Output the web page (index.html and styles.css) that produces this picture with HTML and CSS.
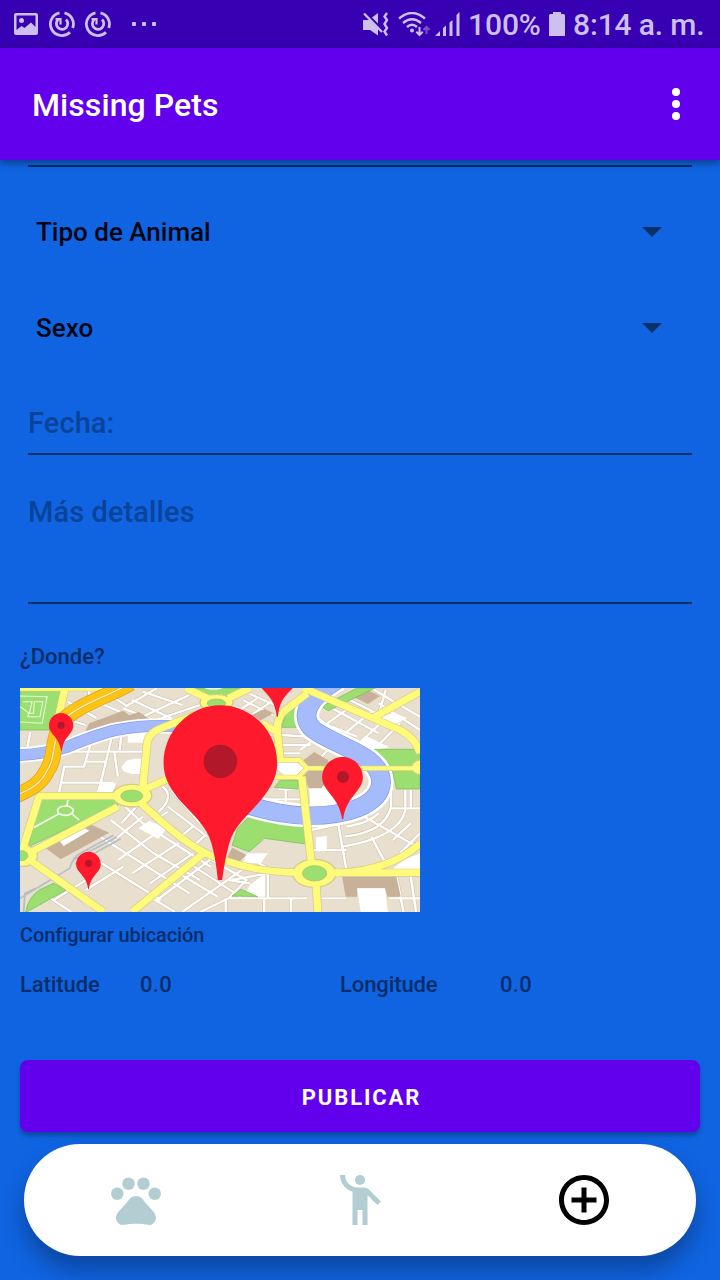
FILE: index.html
```html
<!DOCTYPE html>
<html lang="es">
<head>
<meta charset="utf-8">
<title>Missing Pets</title>
<link rel="stylesheet" href="styles.css">
</head>
<body>
<div class="screen">
  <header class="status">
    <div class="status-left">
      <svg class="ic-photo" width="24" height="22" viewBox="0 0 24 22"><path fill="currentColor" fill-rule="evenodd" d="M2 0h20a2 2 0 0 1 2 2v18a2 2 0 0 1-2 2H2a2 2 0 0 1-2-2V2a2 2 0 0 1 2-2zm.5 2.500V17l5-4 3 2 6.500-5.500 4.500 4.500V2.500zM7.500 5a2.500 2.500 0 1 1 0 5 2.500 2.500 0 0 1 0-5z"/></svg>
      <svg class="ic-sync" width="28" height="28" viewBox="0 0 28 28"><g fill="none" stroke="currentColor" stroke-width="2.800"><path d="M11.500 2.800A11.500 11.500 0 1 0 22 22.200M16.500 2.800A11.500 11.500 0 0 1 24.700 18"/><path d="M18 9.500a5.700 5.700 0 1 1-7.500-.3"/><path d="M7.500 9h5v5.500" stroke-width="2.200"/></g></svg>
      <svg class="ic-sync" width="28" height="28" viewBox="0 0 28 28"><g fill="none" stroke="currentColor" stroke-width="2.800"><path d="M11.500 2.800A11.500 11.500 0 1 0 22 22.200M16.500 2.800A11.500 11.500 0 0 1 24.700 18"/><path d="M18 9.500a5.700 5.700 0 1 1-7.500-.3"/><path d="M7.500 9h5v5.500" stroke-width="2.200"/></g></svg>
      <svg class="ic-more" width="25" height="4" viewBox="0 0 25 4" fill="currentColor"><rect width="4" height="4" rx="1"/><rect x="10" width="4" height="4" rx="1"/><rect x="20" width="4" height="4" rx="1"/></svg>
    </div>
    <div class="status-right">
      <svg class="ic-mute" width="27" height="25" viewBox="0 0 27 25"><path fill="currentColor" d="M1 8h7l8 8v7.500L8 18H1zM10 5.500 16 1v10.500z"/><path stroke="currentColor" stroke-width="2.400" fill="none" d="M2 1.500 20 20M25 1l-2.500 3.500 2.500 3.500-2.500 4 2.500 4-2.500 3.500 2.500 4"/></svg>
      <svg class="ic-wifi" width="32" height="25" viewBox="0 0 32 25"><g fill="none" stroke="currentColor" stroke-width="2.400"><path d="M1 6.500Q14-4.500 27 6.500M5 11Q14 3.500 23 11M9 15Q14 10.500 19 15"/></g><circle cx="14" cy="18.500" r="2" fill="currentColor"/><path d="M21.500 15v8M18.300 19.800l3.200 3.200 3.200-3.200" fill="none" stroke="currentColor" stroke-width="2"/><path d="M28.500 22v-7M25.500 18l3-3 3 3" fill="none" stroke="#7b52cf" stroke-width="2"/></svg>
      <svg class="ic-signal" width="25" height="24" viewBox="0 0 25 24" fill="currentColor"><path d="M0 24 5 19v5zM8 16l3-2.500V24H8zM14.500 10.500l3-2.500v16h-3zM21.500 3l3-3v24h-3z"/></svg>
      <span class="battery-text">100%</span>
      <svg class="ic-battery" width="16" height="24" viewBox="0 0 16 24"><path fill="currentColor" d="M4 0h8v2h2.500A1.500 1.500 0 0 1 16 3.500V24H0V3.500A1.500 1.500 0 0 1 1.500 2H4z"/></svg>
      <span class="clock">8:14 a. m.</span>
    </div>
  </header>

  <div class="appbar">
    <h1 class="title">Missing Pets</h1>
    <svg class="overflow" width="8" height="32" viewBox="0 0 8 32" fill="#fff"><circle cx="4" cy="4" r="4"/><circle cx="4" cy="16" r="4"/><circle cx="4" cy="28" r="4"/></svg>
  </div>

  <main class="form">
    <div class="field field-cut"></div>
    <div class="spinner"><span>Tipo de Animal</span><i class="arrow"></i></div>
    <div class="spinner"><span>Sexo</span><i class="arrow"></i></div>
    <div class="field field-date">Fecha:</div>
    <div class="field field-details">Más detalles</div>
    <div class="label where">¿Donde?</div>
    <svg class="map" width="400" height="224" viewBox="56 294 1120 672" preserveAspectRatio="none">
      <defs>
        <g id="streets">
          <path d="M56 475 160 478M85 425 75 480M215 360 180 385 240 405M190 335 270 384M260 330 335 365M300 312 352 345M250 294V325M240 355 330 310M400 305 510 345M370 330 480 385M345 355 440 395M350 350 440 294M400 380 530 315M450 385 560 345"/>
          <path d="M260 440 235 530H180L165 610M315 430 300 500 275 610M180 485H405M240 515H300M170 578H320M320 485 330 560M340 430 335 480"/>
          <path d="M455 590Q490 620 445 665M480 600 560 700M470 650 580 740M435 690 470 665M500 745 540 710M540 770 575 735M350 650 400 700 590 830M310 690 430 790 560 870M280 740 530 910M240 790 450 930M390 640 340 700M400 680 320 750M450 720 330 810M500 760 370 850M540 790 420 880M240 900 345 830M150 930 250 865M180 890 250 950M120 910 200 966M130 840 180 870M560 790 690 870 640 925M530 820 680 925M500 850 610 920M420 920 490 966M640 925 560 966M440 930 600 800M510 966 690 830M640 870 700 880"/>
          <path d="M640 925H860M900 925H970M632 925V966M740 925V966M815 925V966M750 830V925M690 780 740 745M650 870 750 850M690 800 760 840"/>
          <path d="M660 350 730 390M680 330 765 375M700 312 770 345M650 375 720 325M690 385 760 335M790 435 860 440M790 465H870M790 490H840M850 440 970 500M840 480 890 440M900 500 930 465M780 598H850M800 598V660M720 628H850M735 600 725 640"/>
          <path d="M905 400 1000 440M930 355 1060 430M970 325 1110 400M910 405 975 355M960 435 1040 365M1005 460 1080 385M1060 465 1120 400M1080 300 1060 375M1040 294 1110 340M1110 340 1176 380M1060 340 1176 420M880 375 910 400"/>
          <path d="M945 690 970 840M965 740Q1080 725 1095 650V600M970 710Q1030 700 1060 670M960 770Q1120 740 1135 660V600M1020 680 1176 775M1040 740 1085 830M1100 750 1150 700M1120 790 1176 730M1095 655H1176M875 780H970M1150 600V655M1110 860 1130 966M1150 860 1165 966M1090 925H1176M870 720 960 700"/>
        </g>
      </defs>
      <rect x="56" y="294" width="1120" height="672" fill="#e8dfce"/>
      <use href="#streets" class="kerb"/>
      <use href="#streets" class="street"/>
      <!-- open blocks -->
      <g fill="#fff">
        <path d="M358 430h52v28h-52zM340 530l15-18 20-6h25v46h-30l-25-8zM280 580h45l-10 27h-45zM388 715l30-22 50 22-25 32zM700 885l42-35v70h-60zM865 590l110-5 10 70-115 12zM885 742l30-4v46h-30zM1063 385l40-18 36 18-36 20zM990 470l40-30 60 32-30 8zM1130 810l46-20v50h-80zM690 790h60l-20 30h-50z"/>
      </g>
      <!-- buildings -->
      <g fill="#c7b199"><path d="M238 425 250 400 345 362 362 376 388 366 422 388ZM120 768 240 697 306 728 170 808ZM705 375 740 357 765 370 728 392ZM992 322 1028 300 1064 318 1030 342ZM850 510 880 486 918 510 930 550 900 595 865 595 850 560ZM635 805 650 773 690 795 670 815ZM958 860H1110L1122 920H1085L1078 895H1000V920H968Z"/></g>
      <path d="M158 740 220 704 250 722 178 768ZM1000 895H1078L1086 966H1010Z" fill="#fff"/>
      <g fill="none" stroke="#b9bdc4" stroke-width="5"><path d="M56 925 195 835Q205 800 225 790L318 736M205 810 328 741M210 822 338 746M66 966 70 910 100 895"/></g>
      <!-- parks -->
      <g fill="#9cde6f" stroke="#72bd55" stroke-width="2"><path d="M56 298H171L146 420H56ZM520 294H700L650 320 610 350 565 315ZM112 625H320L330 645 80 770ZM72 966Q80 920 110 900L150 880 185 900 75 966ZM700 678 780 700 850 705 856 762 740 745 698 785 650 766 665 715ZM785 570 835 572V598L768 592ZM1048 478H1176V597H1110L1095 530ZM1000 294H1050L920 362 900 350ZM788 412 800 370 832 345 835 412ZM650 918 675 898 722 920Z"/></g>
      <g fill="none" stroke="#e9fade" stroke-width="3"><path d="M56 318 132 320 118 400 56 396M64 335H90L82 370 56 350M96 335H120L112 380H78L80 370H94Z"/></g>
      <g fill="none" stroke="#f4faef" stroke-width="5"><ellipse cx="183" cy="662" rx="22" ry="14"/><path d="M188 648 190 628M164 672 92 714M202 672 222 690M575 294Q600 300 620 294"/></g>
      <!-- river -->
      <g fill="none">
        <path stroke="#fff" stroke-width="46" d="M40 496Q120 494 190 470C280 430 350 398 520 410"/>
        <path stroke="#8ba3e6" stroke-width="35" d="M40 496Q120 494 190 470C280 430 350 398 520 410"/>
        <path stroke="#a6bbfc" stroke-width="31" d="M40 496Q120 494 190 470C280 430 350 398 520 410"/>
        <path stroke="#fff" stroke-width="70" d="M945 270C850 330 835 395 890 428C960 475 1066 500 1067 575C1066 650 960 678 860 677C790 675 735 660 680 640"/>
        <path stroke="#7f99dc" stroke-width="55" d="M945 270C850 330 835 395 890 428C960 475 1066 500 1067 575C1066 650 960 678 860 677C790 675 735 660 680 640"/>
        <path stroke="#a6bbfc" stroke-width="51" d="M945 270C850 330 835 395 890 428C960 475 1066 500 1067 575C1066 650 960 678 860 677C790 675 735 660 680 640"/>
      </g>
      <!-- main roads -->
      <defs>
        <g id="roads">
          <path d="M182 294 160 400M105 618H330M110 618 60 790M80 790 330 650M70 800 290 966M400 590 412 460Q415 430 450 415L545 375M400 600 475 565M395 640C460 700 540 790 640 815Q720 845 830 848M575 785 370 966M520 294 590 330M640 325 700 294M735 400 775 425M860 310 800 360Q770 385 778 440L785 510M850 294 1120 420Q1165 445 1176 490M1045 383 1176 305M845 560 872 820M885 880 890 966M930 848H1176M940 850Q1100 840 1176 760"/>
        </g>
        <g id="lanes"><path d="M56 296H350M860 535H1176M770 510H838L860 535 835 562H770"/></g>
      </defs>
      <use href="#roads" class="road-case"/><use href="#lanes" class="lane-case"/>
      <g fill="#fffb7a" stroke="#d5cb8c" stroke-width="4"><ellipse cx="370" cy="617" rx="55" ry="34"/><ellipse cx="880" cy="850" rx="61" ry="42"/><ellipse cx="606" cy="338" rx="46" ry="25"/><ellipse cx="64" cy="797" rx="41" ry="32"/><ellipse cx="1176" cy="532" rx="23" ry="22"/></g>
      <use href="#roads" class="road"/><use href="#lanes" class="lane"/>
      <path d="M780 518 832 518 850 535 830 554H795L776 536Z" fill="#fff"/>
      <g fill="#9cde6f" stroke="#9fc25b" stroke-width="2"><ellipse cx="369" cy="618" rx="31" ry="18"/><ellipse cx="881" cy="850" rx="34" ry="23"/><ellipse cx="606" cy="340" rx="26" ry="13"/><ellipse cx="60" cy="797" rx="18" ry="15"/></g>
      <!-- motorway -->
      <g fill="none"><path stroke="#d9a22c" stroke-width="46" d="M365 280C290 325 205 350 170 400C145 460 155 510 130 545C110 590 70 602 40 620"/><path stroke="#fdc413" stroke-width="42" d="M365 280C290 325 205 350 170 400C145 460 155 510 130 545C110 590 70 602 40 620"/><path stroke="#e0a82a" stroke-width="7" d="M365 280C290 325 205 350 170 400C145 460 155 510 130 545C110 590 70 602 40 620"/><path stroke="#fff0b5" stroke-width="4" d="M365 280C290 325 205 350 170 400C145 460 155 510 130 545C110 590 70 602 40 620"/></g>
      <!-- pins -->
      <g fill="#ff192c">
        <path d="M617 346C704 346 776 423 776 520C776 567 752 603 723 640C690 680 655 710 642 760Q630 805 622 870H610Q604 805 592 760C579 710 545 680 511 640C480 603 458 567 458 520C458 423 530 346 617 346Z"/>
        <path d="M171 369C190 369 205 386 205 407C205 432 177 440 173 483H171C167 440 137 432 137 407C137 386 152 369 171 369Z"/>
        <path d="M248 785C267 785 282 802 282 823C282 848 254 856 249 897H247C243 856 213 848 213 823C213 802 229 785 248 785Z"/>
        <path d="M959 501C991 501 1016 528 1016 563C1016 602 968 620 961 688H958C950 620 902 602 902 563C902 528 928 501 959 501Z"/>
        <path d="M732 294H820C800 318 784 327 778 380H775C770 333 753 318 732 294Z"/>
      </g>
      <g fill="#b21829"><ellipse cx="617" cy="514" rx="47" ry="50"/><ellipse cx="171" cy="406" rx="10" ry="11"/><ellipse cx="248" cy="820" rx="10" ry="11"/><ellipse cx="960" cy="561" rx="17" ry="18"/></g>
    </svg>
    <div class="label configure">Configurar ubicación</div>
    <div class="coords label">
      <span class="name">Latitude</span><span>0.0</span><span class="name">Longitude</span><span>0.0</span>
    </div>
    <button class="publish">PUBLICAR</button>
  </main>

  <nav class="bottom-nav">
    <svg class="nav-icon" viewBox="0 0 24 24"><circle cx="4.500" cy="9.500" r="2.500"/><circle cx="9" cy="5.500" r="2.500"/><circle cx="15" cy="5.500" r="2.500"/><circle cx="19.500" cy="9.500" r="2.500"/><path d="M17.340 14.860c-.87-1.020-1.600-1.890-2.480-2.910-.46-.54-1.050-1.080-1.750-1.320-.11-.04-.22-.07-.33-.09-.25-.04-.52-.04-.78-.04s-.53 0-.79.05c-.11.02-.22.05-.33.09-.7.24-1.280.78-1.750 1.320-.87 1.020-1.600 1.890-2.480 2.910-1.310 1.310-2.920 2.760-2.620 4.790.29 1.020 1.020 2.030 2.330 2.320.73.15 3.060-.44 5.540-.44h.18c2.480 0 4.810.58 5.540.44 1.310-.29 2.040-1.310 2.330-2.320.31-2.040-1.300-3.490-2.610-4.800z"/></svg>
    <svg class="nav-icon" viewBox="0 0 24 24"><circle cx="12" cy="4" r="2"/><path d="M15.890 8.110C15.500 7.720 14.830 7 13.530 7h-2.540C8.240 6.990 6 4.750 6 2H4c0 3.160 2.110 5.840 5 6.710V22h2v-6h2v6h2V10.050L18.950 14l1.410-1.410-4.470-4.480z"/></svg>
    <svg class="nav-icon active" viewBox="0 0 24 24"><path d="M13 7h-2v4H7v2h4v4h2v-4h4v-2h-4V7zm-1-5C6.480 2 2 6.480 2 12s4.480 10 10 10 10-4.480 10-10S17.520 2 12 2zm0 18c-4.410 0-8-3.590-8-8s3.590-8 8-8 8 3.590 8 8-3.590 8-8 8z"/></svg>
  </nav>
</div>
</body>
</html>
```
FILE: styles.css
```css
* { box-sizing: border-box; }
body { margin: 0; font-family: Roboto, "Liberation Sans", sans-serif; font-weight: 500; }
.screen { width: 720px; height: 1280px; overflow: hidden; background: #1064e2; display: flex; flex-direction: column; }
.screen svg { display: block; flex: none; }

.status { height: 48px; flex: none; background: #3700b3; color: #cdbfef; display: flex; justify-content: space-between; padding: 0 16px 0 14px; font-size: 30px; line-height: 49px; }
.status-left, .status-right { display: flex; align-items: center; }
.ic-sync { margin-left: 10px; }
.ic-sync + .ic-sync { margin-left: 8px; }
.ic-more { margin-left: 20px; }
.ic-wifi { margin-left: 9px; }
.ic-signal { margin-left: 5px; }
.battery-text { margin-left: 8px; width: 73px; white-space: nowrap; letter-spacing: -0.1px; }
.ic-battery { margin-left: 8px; }
.clock { margin-left: 8px; width: 131px; white-space: nowrap; letter-spacing: -0.15px; }

.appbar { height: 112px; flex: none; background: #6200ee; display: flex; align-items: center; justify-content: space-between; padding: 0 40px 0 32px; box-shadow: 0 3px 8px rgba(0,0,0,.4); z-index: 1; }
.title { margin: 1px 0 0; color: #fff; font-size: 32px; font-weight: 500; line-height: 40px; letter-spacing: 0.08px; }

.form { flex: none; height: 984px; padding: 0 20px; display: flex; flex-direction: column; }
.field { margin: 0 8px; border-bottom: 2px solid #062d6c; color: #09439a; font-size: 29px; line-height: 34px; letter-spacing: 0.1px; flex: none; }
.field-cut { height: 7px; margin-bottom: 17px; }
.spinner { height: 96px; flex: none; display: flex; align-items: center; justify-content: space-between; padding: 0 38px 0 16px; font-size: 26px; color: #000512; }
.arrow { border: 10px solid transparent; border-top-color: #0a3068; border-bottom: 0; }
.field-date { height: 79px; padding-top: 30px; }
.field-details { height: 149px; padding-top: 40px; }
.label { color: #072d6a; flex: none; font-size: 22px; line-height: 26px; }
.where { margin-top: 40px; height: 44px; }
.configure { margin-top: 10px; font-size: 20px; height: 50px; letter-spacing: -0.1px; }
.coords { display: grid; grid-template-columns: 120px 200px 160px 1fr; height: 88px; letter-spacing: 0.3px; }
.coords .name { letter-spacing: -0.1px; }
.publish { flex: none; height: 72px; border: 0; border-radius: 8px; background: #6200ee; color: #fff; font: 700 22px/26px Roboto, sans-serif; letter-spacing: 1.9px; padding: 3px 0 0 3px; box-shadow: 0 4px 4px rgba(0,0,0,.27); }

.bottom-nav { flex: none; height: 112px; margin: 0 24px; border-radius: 56px; background: #fff; display: grid; grid-template-columns: repeat(3, 1fr); align-items: center; justify-items: center; box-shadow: 0 14px 24px rgba(0,0,0,.3); }
.nav-icon { width: 60px; height: 60px; fill: #b3ced2; }
.nav-icon.active { fill: #000; }

.kerb, .street, .road-case, .road, .lane-case, .lane { fill: none; }
.kerb { stroke: #cdbfa9; stroke-width: 10; }
.street { stroke: #fff; stroke-width: 7; }
.road-case { stroke: #d5cb8c; stroke-width: 24; }
.road { stroke: #fffb7a; stroke-width: 20; }
.lane-case { stroke: #d5cb8c; stroke-width: 16; }
.lane { stroke: #fffb7a; stroke-width: 12; }
```
